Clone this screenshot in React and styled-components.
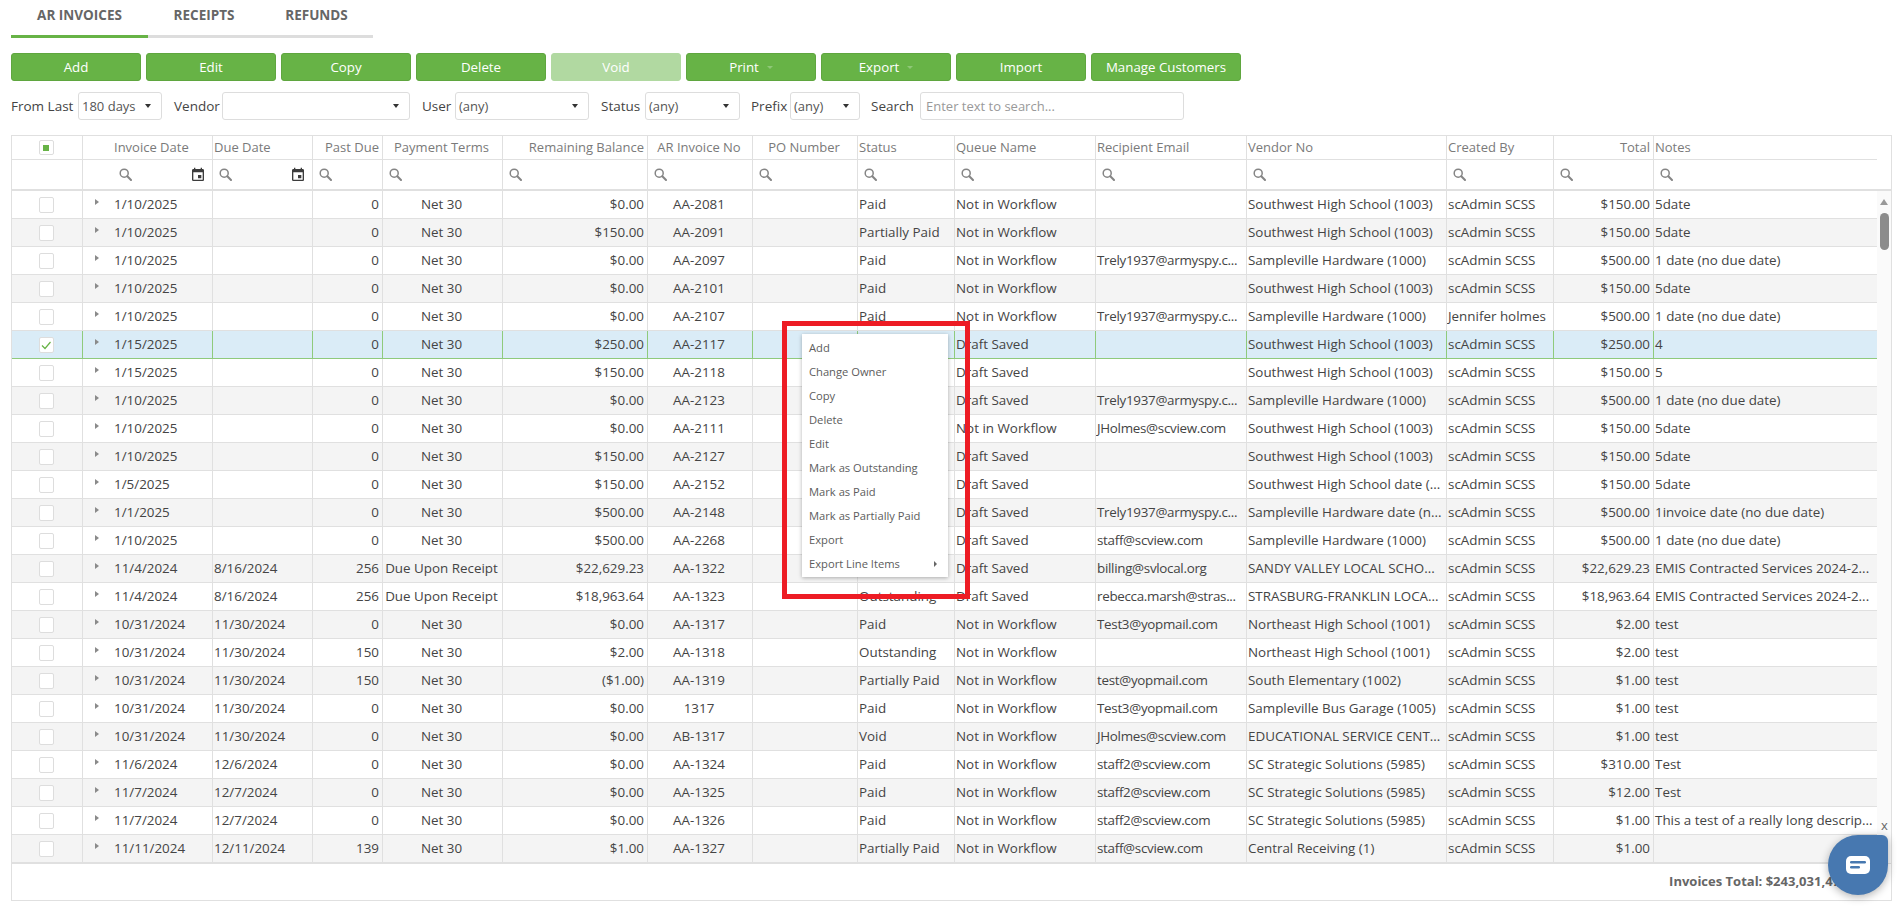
import React from "react"
import { createGlobalStyle, styled } from "styled-components"
import { MdEvent } from "react-icons/md"

const columns = [
  { width: 71, title: "", align: "center" },
  { width: 130, title: "Invoice Date", align: "left", indent: 31 },
  { width: 100, title: "Due Date", align: "left" },
  { width: 70, title: "Past Due", align: "right" },
  { width: 120, title: "Payment Terms", align: "center" },
  { width: 145, title: "Remaining Balance", align: "right" },
  { width: 105, title: "AR Invoice No", align: "center" },
  { width: 105, title: "PO Number", align: "center" },
  { width: 97, title: "Status", align: "left" },
  { width: 141, title: "Queue Name", align: "left" },
  { width: 151, title: "Recipient Email", align: "left" },
  { width: 200, title: "Vendor No", align: "left" },
  { width: 107, title: "Created By", align: "left" },
  { width: 100, title: "Total", align: "right" },
  { width: 223, title: "Notes", align: "left" }
]

const gridColumns = columns.map((c) => `${c.width}px`).join(" ")

const SW = "Southwest High School (1003)"
const SH = "Sampleville Hardware (1000)"
const SC = "SC Strategic Solutions (5985)"
const NW = "Not in Workflow"
const DS = "Draft Saved"
const ADMIN = "scAdmin SCSS"
const TRELY = "Trely1937@armyspy.c..."
const NODUE = "1 date (no due date)"
const EMIS = "EMIS Contracted Services 2024-2..."
const OUT = "Outstanding"

// date, due, past due, terms, balance, invoice no, status, queue, email, vendor, created by, total, notes
// status is left empty on the rows where the context menu covers it
const rows = [
  ["1/10/2025", "", "0", "Net 30", "$0.00", "AA-2081", "Paid", NW, "", SW, ADMIN, "$150.00", "5date"],
  ["1/10/2025", "", "0", "Net 30", "$150.00", "AA-2091", "Partially Paid", NW, "", SW, ADMIN, "$150.00", "5date"],
  ["1/10/2025", "", "0", "Net 30", "$0.00", "AA-2097", "Paid", NW, TRELY, SH, ADMIN, "$500.00", NODUE],
  ["1/10/2025", "", "0", "Net 30", "$0.00", "AA-2101", "Paid", NW, "", SW, ADMIN, "$150.00", "5date"],
  ["1/10/2025", "", "0", "Net 30", "$0.00", "AA-2107", "Paid", NW, TRELY, SH, "Jennifer holmes", "$500.00", NODUE],
  ["1/15/2025", "", "0", "Net 30", "$250.00", "AA-2117", "", DS, "", SW, ADMIN, "$250.00", "4"],
  ["1/15/2025", "", "0", "Net 30", "$150.00", "AA-2118", "", DS, "", SW, ADMIN, "$150.00", "5"],
  ["1/10/2025", "", "0", "Net 30", "$0.00", "AA-2123", "", DS, TRELY, SH, ADMIN, "$500.00", NODUE],
  ["1/10/2025", "", "0", "Net 30", "$0.00", "AA-2111", "", NW, "JHolmes@scview.com", SW, ADMIN, "$150.00", "5date"],
  ["1/10/2025", "", "0", "Net 30", "$150.00", "AA-2127", "", DS, "", SW, ADMIN, "$150.00", "5date"],
  ["1/5/2025", "", "0", "Net 30", "$150.00", "AA-2152", "", DS, "", "Southwest High School date (...", ADMIN, "$150.00", "5date"],
  ["1/1/2025", "", "0", "Net 30", "$500.00", "AA-2148", "", DS, TRELY, "Sampleville Hardware date (n...", ADMIN, "$500.00", "1invoice date (no due date)"],
  ["1/10/2025", "", "0", "Net 30", "$500.00", "AA-2268", "", DS, "staff@scview.com", SH, ADMIN, "$500.00", NODUE],
  ["11/4/2024", "8/16/2024", "256", "Due Upon Receipt", "$22,629.23", "AA-1322", "", DS, "billing@svlocal.org", "SANDY VALLEY LOCAL SCHO...", ADMIN, "$22,629.23", EMIS],
  ["11/4/2024", "8/16/2024", "256", "Due Upon Receipt", "$18,963.64", "AA-1323", OUT, DS, "rebecca.marsh@stras...", "STRASBURG-FRANKLIN LOCA...", ADMIN, "$18,963.64", EMIS],
  ["10/31/2024", "11/30/2024", "0", "Net 30", "$0.00", "AA-1317", "Paid", NW, "Test3@yopmail.com", "Northeast High School (1001)", ADMIN, "$2.00", "test"],
  ["10/31/2024", "11/30/2024", "150", "Net 30", "$2.00", "AA-1318", OUT, NW, "", "Northeast High School (1001)", ADMIN, "$2.00", "test"],
  ["10/31/2024", "11/30/2024", "150", "Net 30", "($1.00)", "AA-1319", "Partially Paid", NW, "test@yopmail.com", "South Elementary (1002)", ADMIN, "$1.00", "test"],
  ["10/31/2024", "11/30/2024", "0", "Net 30", "$0.00", "1317", "Paid", NW, "Test3@yopmail.com", "Sampleville Bus Garage (1005)", ADMIN, "$1.00", "test"],
  ["10/31/2024", "11/30/2024", "0", "Net 30", "$0.00", "AB-1317", "Void", NW, "JHolmes@scview.com", "EDUCATIONAL SERVICE CENT...", ADMIN, "$1.00", "test"],
  ["11/6/2024", "12/6/2024", "0", "Net 30", "$0.00", "AA-1324", "Paid", NW, "staff2@scview.com", SC, ADMIN, "$310.00", "Test"],
  ["11/7/2024", "12/7/2024", "0", "Net 30", "$0.00", "AA-1325", "Paid", NW, "staff2@scview.com", SC, ADMIN, "$12.00", "Test"],
  ["11/7/2024", "12/7/2024", "0", "Net 30", "$0.00", "AA-1326", "Paid", NW, "staff2@scview.com", SC, ADMIN, "$1.00", "This a test of a really long descrip..."],
  ["11/11/2024", "12/11/2024", "139", "Net 30", "$1.00", "AA-1327", "Partially Paid", NW, "staff@scview.com", "Central Receiving (1)", ADMIN, "$1.00", ""]
]

const SELECTED_ROW = 5

const toolbarButtons = [
  { label: "Add" },
  { label: "Edit" },
  { label: "Copy" },
  { label: "Delete" },
  { label: "Void", disabled: true },
  { label: "Print", caret: true },
  { label: "Export", caret: true },
  { label: "Import" }
]

const menuItems = [
  "Add",
  "Change Owner",
  "Copy",
  "Delete",
  "Edit",
  "Mark as Outstanding",
  "Mark as Paid",
  "Mark as Partially Paid",
  "Export"
]

const SearchGlyph = () => (
  <SearchIcon viewBox="0 0 13 13">
    <circle cx="5.2" cy="5.2" r="4" />
    <path d="M8.3 8.3 12 12" />
  </SearchIcon>
)

const App = () => {
  return (
    <Page>
      <GlobalStyle />
      <Tabs>
        <Tab $active $width={137}>AR INVOICES</Tab>
        <Tab $width={112}>RECEIPTS</Tab>
        <Tab $width={113}>REFUNDS</Tab>
      </Tabs>

      <Toolbar>
        {toolbarButtons.map((b) => (
          <ActionButton key={b.label} $disabled={b.disabled}>
            {b.label}
            {b.caret && <ButtonCaret />}
          </ActionButton>
        ))}
        <ActionButton $wide>Manage Customers</ActionButton>
      </Toolbar>

      <Filters>
        <FilterLabel $width={67}>From Last</FilterLabel>
        <SelectBox $width={84}>180 days<SelectCaret /></SelectBox>
        <FilterLabel $gap={12} $width={48}>Vendor</FilterLabel>
        <SelectBox $width={188}><SelectCaret /></SelectBox>
        <FilterLabel $gap={12} $width={33}>User</FilterLabel>
        <SelectBox $width={134}>(any)<SelectCaret /></SelectBox>
        <FilterLabel $gap={12} $width={44}>Status</FilterLabel>
        <SelectBox $width={95}>(any)<SelectCaret /></SelectBox>
        <FilterLabel $gap={11} $width={39}>Prefix</FilterLabel>
        <SelectBox $width={70}>(any)<SelectCaret /></SelectBox>
        <FilterLabel $gap={11} $width={49}>Search</FilterLabel>
        <SearchInput placeholder="Enter text to search..." />
      </Filters>

      <Grid>
        <HeaderRow>
          {columns.map((col, i) => (
            <HeaderCell key={i} $align={col.align} $indent={col.indent}>
              {i === 0 ? <SelectAllBox><SelectAllMark /></SelectAllBox> : col.title}
            </HeaderCell>
          ))}
        </HeaderRow>
        <FilterRow>
          {columns.map((col, i) => (
            <FilterCell key={i} $indent={col.indent && col.indent + 5}>
              {i > 0 && <SearchGlyph />}
              {(i === 1 || i === 2) && <MdEvent size={16} color="#3c3c3c" />}
            </FilterCell>
          ))}
        </FilterRow>

        <Body>
          <Rows>
            {rows.map((row, r) => (
              <Row key={r} $odd={r % 2 === 1} $selected={r === SELECTED_ROW}>
                <Cell $align="center" $selected={r === SELECTED_ROW}>
                  <RowCheck>{r === SELECTED_ROW && <CheckMark viewBox="0 0 12 12"><path d="M2 6.5 5 9.5 10.5 3" /></CheckMark>}</RowCheck>
                </Cell>
                <DateCell $selected={r === SELECTED_ROW}>
                  <ExpandArrow />
                  {row[0]}
                </DateCell>
                <Cell $selected={r === SELECTED_ROW}>{row[1]}</Cell>
                <Cell $align="right" $selected={r === SELECTED_ROW}>{row[2]}</Cell>
                <Cell $align="center" $selected={r === SELECTED_ROW}>{row[3]}</Cell>
                <Cell $align="right" $selected={r === SELECTED_ROW}>{row[4]}</Cell>
                <Cell $align="center" $selected={r === SELECTED_ROW}>{row[5]}</Cell>
                <Cell $selected={r === SELECTED_ROW}></Cell>
                <Cell $selected={r === SELECTED_ROW}>{row[6]}</Cell>
                <Cell $selected={r === SELECTED_ROW}>{row[7]}</Cell>
                <EmailCell $selected={r === SELECTED_ROW}>{row[8]}</EmailCell>
                <Cell $selected={r === SELECTED_ROW}>{row[9]}</Cell>
                <Cell $selected={r === SELECTED_ROW}>{row[10]}</Cell>
                <Cell $align="right" $selected={r === SELECTED_ROW}>{row[11]}</Cell>
                <Cell $last>{row[12]}</Cell>
              </Row>
            ))}
          </Rows>
          <Scrollbar>
            <ScrollArrow />
            <ScrollThumb />
            <ScrollArrow $down />
          </Scrollbar>
        </Body>

        <GridFooter>Invoices Total: $243,031,477.92</GridFooter>
      </Grid>

      <ContextMenu>
        {menuItems.map((item) => (
          <MenuItem key={item}>{item}</MenuItem>
        ))}
        <MenuItem>
          Export Line Items
          <MenuArrow />
        </MenuItem>
      </ContextMenu>
      <Highlight />

      <ChatClose>x</ChatClose>
      <ChatBubble>
        <svg width="24" height="18" viewBox="0 0 24 18">
          <rect width="24" height="18" rx="5" fill="#fff" />
          <rect x="4" y="5" width="16" height="2.4" rx="1.2" fill="#4778b0" />
          <rect x="4" y="10" width="10" height="2.4" rx="1.2" fill="#4778b0" />
        </svg>
      </ChatBubble>
    </Page>
  )
}

export default App

const GlobalStyle = createGlobalStyle`
  html, body {
    margin: 0;
    padding: 0;
    background: #fff;
  }
  * {
    box-sizing: border-box;
  }
`

const Page = styled.div`
  position: relative;
  width: 1902px;
  height: 908px;
  overflow: hidden;
  padding: 0 10px 0 11px;
  font-family: "Open Sans", "Noto Sans", sans-serif;
  font-size: 13px;
  color: #444;
`

const Tabs = styled.div`
  display: flex;
  width: 362px;
  height: 38px;
  border-bottom: 3px solid #ddd;
`

const Tab = styled.div`
  width: ${(p) => p.$width}px;
  height: 38px;
  padding-top: 6px;
  border-bottom: 3px solid ${(p) => (p.$active ? "#67b346" : "transparent")};
  text-align: center;
  font-size: 13.5px;
  font-weight: 700;
  line-height: 18px;
  color: #666;
`

const Toolbar = styled.div`
  display: flex;
  gap: 5px;
  margin-top: 15px;
`

const ActionButton = styled.div`
  display: flex;
  align-items: center;
  justify-content: center;
  gap: 8px;
  width: ${(p) => (p.$wide ? "150px" : "130px")};
  height: 28px;
  border: 1px solid ${(p) => (p.$disabled ? "#b1d9a1" : "#5fa63f")};
  border-radius: 3px;
  background: ${(p) => (p.$disabled ? "#b1d9a1" : "#67b346")};
  color: #fff;
  font-size: 13.3px;
  white-space: nowrap;
`

const ButtonCaret = styled.span`
  width: 0;
  height: 0;
  border-left: 3px solid transparent;
  border-right: 3px solid transparent;
  border-top: 3px solid #8fc878;
`

const Filters = styled.div`
  display: flex;
  align-items: center;
  height: 28px;
  margin-top: 11px;
`

const FilterLabel = styled.span`
  flex: none;
  width: ${(p) => p.$width}px;
  margin-left: ${(p) => p.$gap || 0}px;
  font-size: 13.5px;
  color: #444;
  white-space: nowrap;
`

const SelectBox = styled.div`
  display: flex;
  align-items: center;
  justify-content: space-between;
  width: ${(p) => p.$width}px;
  height: 28px;
  padding: 0 10px 0 3px;
  border: 1px solid #ddd;
  border-radius: 3px;
  font-size: 13px;
  color: #555;
  white-space: nowrap;
`

const SelectCaret = styled.span`
  margin-left: auto;
  width: 0;
  height: 0;
  border-left: 3px solid transparent;
  border-right: 3px solid transparent;
  border-top: 4px solid #333;
`

const SearchInput = styled.input`
  width: 264px;
  height: 28px;
  padding: 0 5px;
  border: 1px solid #ddd;
  border-radius: 3px;
  outline: none;
  font-family: inherit;
  font-size: 13px;
  color: #555;
  &::placeholder {
    color: #999;
    opacity: 1;
  }
`

const Grid = styled.div`
  width: 1881px;
  height: 766px;
  margin-top: 15px;
  border: 1px solid #e0e0e0;
`

const HeaderRow = styled.div`
  display: grid;
  grid-template-columns: ${gridColumns};
  width: 1865px;
  height: 24px;
  border-bottom: 1px solid #e0e0e0;
`

const HeaderCell = styled.div`
  display: flex;
  align-items: center;
  justify-content: ${(p) => (p.$align === "right" ? "flex-end" : p.$align === "center" ? "center" : "flex-start")};
  padding: 0 3px 2px ${(p) => p.$indent || 1}px;
  border-right: 1px solid #e0e0e0;
  font-size: 13px;
  color: #7a7a7a;
  white-space: nowrap;
  overflow: hidden;
  &:last-child {
    border-right: none;
  }
`

const SelectAllBox = styled.span`
  display: flex;
  align-items: center;
  justify-content: center;
  width: 15px;
  height: 15px;
  margin-top: 2px;
  border: 1px solid #ddd;
  border-radius: 2px;
`

const SelectAllMark = styled.span`
  width: 6px;
  height: 6px;
  background: #67b346;
`

const FilterRow = styled.div`
  display: grid;
  grid-template-columns: ${gridColumns};
  height: 31px;
  border-bottom: 2px solid #e0e0e0;
`

const FilterCell = styled.div`
  display: flex;
  align-items: center;
  justify-content: space-between;
  padding: 0 6px 0 ${(p) => p.$indent || 6}px;
  border-right: 1px solid #e0e0e0;
  &:nth-child(15) {
    border-right: none;
  }
`

const SearchIcon = styled.svg`
  width: 13px;
  height: 13px;
  fill: none;
  stroke: #858585;
  stroke-width: 1.5;
  stroke-linecap: round;
  path {
    stroke-width: 2;
  }
`

const Body = styled.div`
  display: flex;
`

const Rows = styled.div`
  width: 1865px;
`

const Row = styled.div`
  display: grid;
  grid-template-columns: ${gridColumns};
  height: 28px;
  border-bottom: 1px solid ${(p) => (p.$selected ? "#8fca7c" : "#e0e0e0")};
  background: ${(p) => (p.$selected ? "#daecf7" : p.$odd ? "#f4f4f4" : "#fff")};
`

const Cell = styled.div`
  padding: 0 3px 0 1px;
  border-right: ${(p) => (p.$last ? "none" : `1px solid ${p.$selected ? "#8fca7c" : "#e0e0e0"}`)};
  text-align: ${(p) => p.$align || "left"};
  line-height: 27px;
  font-size: 13.4px;
  color: #444;
  white-space: nowrap;
  overflow: hidden;
`

const EmailCell = styled(Cell)`
  letter-spacing: -0.3px;
`

const DateCell = styled(Cell)`
  display: flex;
  align-items: center;
  padding-left: 12px;
`

const ExpandArrow = styled.span`
  width: 0;
  height: 0;
  margin: 0 15px 6px 0;
  border-top: 3.5px solid transparent;
  border-bottom: 3.5px solid transparent;
  border-left: 4px solid #8a8a8a;
`

const RowCheck = styled.span`
  display: inline-flex;
  align-items: center;
  justify-content: center;
  width: 15px;
  height: 16px;
  margin-top: 6px;
  vertical-align: top;
  border: 1px solid #ddd;
  border-radius: 2px;
  background: #fff;
`

const CheckMark = styled.svg`
  width: 12px;
  height: 12px;
  fill: none;
  stroke: #67b346;
  stroke-width: 1.2;
`

const Scrollbar = styled.div`
  display: flex;
  flex-direction: column;
  align-items: center;
  width: 15px;
  height: 672px;
  padding: 8px 0 12px;
  background: #fafafa;
`

const ScrollArrow = styled.span`
  width: 0;
  height: 0;
  border-left: 4.5px solid transparent;
  border-right: 4.5px solid transparent;
  ${(p) => (p.$down ? "border-top: 6px solid #999; margin-top: auto;" : "border-bottom: 6px solid #999;")}
`

const ScrollThumb = styled.span`
  width: 9px;
  height: 37px;
  margin-top: 8px;
  border-radius: 5px;
  background: #8c8c8c;
`

const GridFooter = styled.div`
  padding: 8px 25px 0 0;
  height: 37px;
  border-top: 1px solid #e0e0e0;
  text-align: right;
  font-size: 13px;
  font-weight: 700;
  color: #666;
  white-space: nowrap;
`

const ContextMenu = styled.div`
  position: absolute;
  left: 802px;
  top: 334px;
  width: 146px;
  height: 243px;
  padding: 2px 0;
  background: #fff;
  box-shadow: 0 1px 4px rgba(0, 0, 0, 0.3);
`

const MenuItem = styled.div`
  position: relative;
  height: 24px;
  padding-left: 7px;
  font-size: 11.2px;
  line-height: 24px;
  color: #5c5c5c;
  white-space: nowrap;
`

const MenuArrow = styled.span`
  position: absolute;
  right: 11px;
  top: 9px;
  width: 0;
  height: 0;
  border-top: 3px solid transparent;
  border-bottom: 3px solid transparent;
  border-left: 3px solid #666;
`

const Highlight = styled.div`
  position: absolute;
  left: 782px;
  top: 321px;
  width: 188px;
  height: 278px;
  border: 5px solid #ed1c24;
  pointer-events: none;
`

const ChatBubble = styled.div`
  position: absolute;
  left: 1828px;
  top: 835px;
  display: flex;
  align-items: center;
  justify-content: center;
  width: 60px;
  height: 60px;
  border-radius: 50% 6px 50% 50%;
  background: #4778b0;
  box-shadow: 0 2px 8px rgba(0, 0, 0, 0.3);
`

const ChatClose = styled.span`
  position: absolute;
  left: 1881px;
  top: 816px;
  font-size: 13px;
  line-height: 18px;
  color: #666;
`
